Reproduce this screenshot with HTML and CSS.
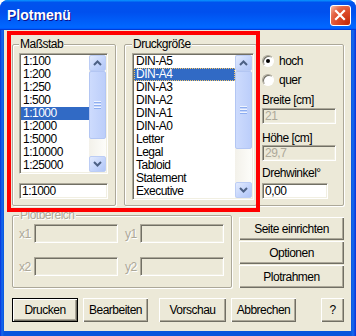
FILE: index.html
```html
<!DOCTYPE html>
<html lang="de">
<head>
    <meta charset="UTF-8">
    <title>Plotmenü</title>
    <link rel="stylesheet" href="styles.css">
</head>
<body>
    <div class="window">
        <div class="titlebar">
            <span class="title">Plotmenü</span>
            <button class="close">
                <svg width="19" height="19" viewBox="0 0 19 19"><path d="M5 5 L13 13 M13 5 L5 13" stroke="#fff" stroke-width="2.2" stroke-linecap="square"/></svg>
            </button>
        </div>

        <div class="client">
            <div class="top-row">
                <fieldset class="group scale-group">
                    <legend>Maßstab</legend>
                    <div class="listbox scale-list">
                        <ul class="items">
                            <li>1:100</li>
                            <li>1:200</li>
                            <li>1:250</li>
                            <li>1:500</li>
                            <li class="selected">1:1000</li>
                            <li>1:2000</li>
                            <li>1:5000</li>
                            <li>1:10000</li>
                            <li>1:25000</li>
                        </ul>
                        <div class="scrollbar">
                            <div class="sb-btn"><svg width="9" height="6"><path d="M1 5 L4.5 1.5 L8 5" stroke="#4d6185" stroke-width="2" fill="none"/></svg></div>
                            <div class="sb-thumb scale-thumb"><svg width="7" height="8"><rect y="0" width="7" height="1" fill="#eef3fe"/><rect y="1" width="7" height="1" fill="#8eaef0"/><rect y="3" width="7" height="1" fill="#eef3fe"/><rect y="4" width="7" height="1" fill="#8eaef0"/><rect y="6" width="7" height="1" fill="#eef3fe"/><rect y="7" width="7" height="1" fill="#8eaef0"/></svg></div>
                            <div class="sb-track"></div>
                            <div class="sb-btn"><svg width="9" height="6"><path d="M1 1 L4.5 4.5 L8 1" stroke="#4d6185" stroke-width="2" fill="none"/></svg></div>
                        </div>
                    </div>
                    <input class="edit scale-edit" type="text" value="1:1000">
                </fieldset>

                <fieldset class="group size-group">
                    <legend>Druckgröße</legend>
                    <div class="listbox size-list">
                        <ul class="items">
                            <li>DIN-A5</li>
                            <li class="selected focused">DIN-A4</li>
                            <li>DIN-A3</li>
                            <li>DIN-A2</li>
                            <li>DIN-A1</li>
                            <li>DIN-A0</li>
                            <li>Letter</li>
                            <li>Legal</li>
                            <li>Tabloid</li>
                            <li>Statement</li>
                            <li>Executive</li>
                        </ul>
                        <div class="scrollbar">
                            <div class="sb-btn"><svg width="9" height="6"><path d="M1 5 L4.5 1.5 L8 5" stroke="#4d6185" stroke-width="2" fill="none"/></svg></div>
                            <div class="sb-thumb size-thumb"><svg width="7" height="8"><rect y="0" width="7" height="1" fill="#eef3fe"/><rect y="1" width="7" height="1" fill="#8eaef0"/><rect y="3" width="7" height="1" fill="#eef3fe"/><rect y="4" width="7" height="1" fill="#8eaef0"/><rect y="6" width="7" height="1" fill="#eef3fe"/><rect y="7" width="7" height="1" fill="#8eaef0"/></svg></div>
                            <div class="sb-track"></div>
                            <div class="sb-btn"><svg width="9" height="6"><path d="M1 1 L4.5 4.5 L8 1" stroke="#4d6185" stroke-width="2" fill="none"/></svg></div>
                        </div>
                    </div>
                </fieldset>

                <div class="group orient-group">
                    <label class="radio"><span class="radio-box checked"></span>hoch</label>
                    <label class="radio quer"><span class="radio-box"></span>quer</label>
                    <div class="field-label breite-label">Breite [cm]</div>
                    <input class="edit wide-edit breite-edit" type="text" value="21" disabled>
                    <div class="field-label hoehe-label">Höhe [cm]</div>
                    <input class="edit wide-edit" type="text" value="29,7" disabled>
                    <div class="field-label dreh-label">Drehwinkel°</div>
                    <input class="edit dreh-edit" type="text" value="0,00">
                </div>

                <div class="mark-frame"></div>
            </div>

            <div class="middle-row">
                <fieldset class="group plot-group">
                    <legend>Plotbereich</legend>
                    <div class="coords">
                        <div class="coord"><span class="coord-label">x1</span><input class="edit coord-edit" type="text" disabled></div>
                        <div class="coord"><span class="coord-label">y1</span><input class="edit coord-edit" type="text" disabled></div>
                        <div class="coord"><span class="coord-label">x2</span><input class="edit coord-edit" type="text" disabled></div>
                        <div class="coord"><span class="coord-label">y2</span><input class="edit coord-edit" type="text" disabled></div>
                    </div>
                </fieldset>

                <div class="side-buttons">
                    <button class="btn">Seite einrichten</button>
                    <button class="btn">Optionen</button>
                    <button class="btn">Plotrahmen</button>
                </div>
            </div>

            <div class="bottom-row">
                <button class="btn default drucken">Drucken</button>
                <button class="btn bearbeiten">Bearbeiten</button>
                <button class="btn vorschau">Vorschau</button>
                <button class="btn abbrechen">Abbrechen</button>
                <button class="btn help">?</button>
            </div>
        </div>
    </div>
</body>
</html>
```

FILE: styles.css
```css
* {
    box-sizing: border-box;
}

body {
    margin: 0;
    background: #fff;
    font-family: "Liberation Sans", Arial, sans-serif;
    font-size: 12px;
    letter-spacing: -0.5px;
    color: #000;
}

.window {
    width: 356px;
    height: 336px;
    display: flex;
    flex-direction: column;
    background: linear-gradient(to right, #0831d9, #166aee 2px, #0855dd 4px, #0855dd 351px, #166aee 353px, #0831d9);
    border-radius: 8px 8px 0 0;
    overflow: hidden;
}

.titlebar {
    height: 30px;
    display: flex;
    align-items: center;
    justify-content: space-between;
    padding: 0 5px 0 7px;
    background: linear-gradient(180deg, #0997ff, #0053ee 8%, #0050ee 40%, #0066ff 88%, #0066ff 93%, #005bff 95%, #003dd7 96%, #003dd7);
}

.title {
    font-weight: bold;
    font-size: 14px;
    letter-spacing: 0;
    color: #fff;
    text-shadow: 1px 1px #0f1089;
}

.close {
    width: 21px;
    height: 21px;
    padding: 0;
    border: 1px solid #fff;
    border-radius: 3px;
    background: radial-gradient(circle at 90% 90%, #c42b0a 0, #e0512f 55%, #e56a4c 72%, #f6b39f 95%);
    display: flex;
    align-items: center;
    justify-content: center;
}

.client {
    flex: 1;
    margin: 0 5px 5px 4px;
    padding: 7px 7px 0 8px;
    background: #ece9d8;
    position: relative;
}

/* group boxes */

.group {
    margin: 0;
    border: 1px solid #aca899;
    border-radius: 2px;
    box-shadow: inset 1px 1px #fff, 1px 1px #fff;
}

legend {
    padding: 0 1px;
    line-height: 14px;
    background: #ece9d8;
}

.top-row {
    display: flex;
}

.scale-group {
    width: 104px;
    padding: 2px 7px 6px 6px;
}

.size-group {
    width: 133px;
    margin-left: 8px;
    padding: 2px 2px 5px 7px;
}

.orient-group {
    width: 86px;
    margin: 7px 0 0 1px;
    padding: 9px 0 0 3px;
    display: flex;
    flex-direction: column;
    align-items: flex-start;
}

.mark-frame {
    position: absolute;
    left: 3px;
    top: 1px;
    width: 253px;
    height: 181px;
    border: 4px solid #ff0000;
}

/* list boxes */

.listbox {
    display: flex;
    padding: 1px;
    border: 1px solid;
    border-color: #aca899 #fff #fff #aca899;
    box-shadow: inset 1px 1px #716f64, inset -1px -1px #f1efe2;
    background: #fff;
}

.scale-list {
    width: 89px;
}

.size-list {
    width: 122px;
}

.items {
    flex: 1;
    margin: 0;
    padding: 0;
    list-style: none;
}

.items li {
    height: 13px;
    line-height: 13px;
    padding-left: 2px;
    white-space: nowrap;
}

.items .selected {
    background: #316ac5;
    color: #fff;
}

.items .focused {
    outline: 1px dotted #f2c66a;
    outline-offset: -1px;
}

.scrollbar {
    width: 17px;
    display: flex;
    flex-direction: column;
    background: linear-gradient(to right, #f3f1ea, #fdfdfa);
}

.sb-btn {
    height: 16px;
    border: 1px solid #bccdf5;
    border-radius: 2px;
    background: linear-gradient(135deg, #e3ebfe, #c2d3fb 60%, #b1c6f7);
    display: flex;
    align-items: center;
    justify-content: center;
}

.sb-thumb {
    border: 1px solid #b3c6f3;
    border-radius: 2px;
    background: linear-gradient(to right, #cddbfd, #bccefa);
    display: flex;
    align-items: center;
    justify-content: center;
}

.scale-thumb {
    height: 68px;
}

.size-thumb {
    height: 78px;
}

.sb-track {
    flex: 1;
}

/* edit fields */

.edit {
    display: block;
    height: 16px;
    margin: 0;
    padding: 0 2px;
    font: inherit;
    letter-spacing: inherit;
    color: #000;
    border: 1px solid;
    border-color: #aca899 #fff #fff #aca899;
    box-shadow: inset 1px 1px #716f64, inset -1px -1px #f1efe2;
    background: #fff;
    outline: none;
}

.edit:disabled {
    background: #ece9d8;
    color: #aca899;
}

.scale-edit {
    width: 89px;
    margin-top: 9px;
}

.wide-edit {
    width: 74px;
}

.dreh-edit {
    width: 66px;
    margin-top: 3px;
}

.breite-edit {
    margin-top: 1px;
}

/* right side options */

.radio {
    display: flex;
    align-items: center;
    height: 14px;
}

.quer {
    margin-top: 5px;
}

.radio-box {
    width: 12px;
    height: 12px;
    margin-right: 5px;
    border-radius: 50%;
    border: 1px solid;
    border-color: #aca899 #fff #fff #aca899;
    box-shadow: inset 1px 1px #716f64;
    background: #fff;
    display: flex;
    align-items: center;
    justify-content: center;
}

.radio-box.checked::after {
    content: "";
    width: 4px;
    height: 4px;
    border-radius: 50%;
    background: #000;
}

.field-label {
    height: 14px;
    line-height: 14px;
}

.breite-label {
    margin-top: 6px;
}

.hoehe-label {
    margin-top: 7px;
}

.dreh-label {
    margin-top: 5px;
}

/* plot area */

.middle-row {
    display: flex;
    margin-top: 2px;
}

.plot-group {
    width: 220px;
    padding: 2px 6px 11px 6px;
}

.plot-group legend,
.coord-label {
    color: #aca899;
    text-shadow: 1px 1px #fff;
}

.coords {
    display: grid;
    grid-template-columns: 99px 99px;
    column-gap: 7px;
    row-gap: 14px;
}

.coord {
    display: flex;
    align-items: center;
}

.coord-label {
    width: 15px;
}

.coord-edit {
    width: 84px;
    height: 19px;
}

.side-buttons {
    width: 105px;
    margin: 9px 0 0 auto;
    display: flex;
    flex-direction: column;
    gap: 1px;
}

/* buttons */

.btn {
    height: 23px;
    padding: 0;
    border: none;
    font: inherit;
    letter-spacing: inherit;
    color: #000;
    background: #ece9d8;
    box-shadow: inset 1px 1px #fff, inset -1px -1px #716f64, inset -2px -2px #aca899;
}

.btn.default {
    border: 1px solid #000;
}

.bottom-row {
    display: flex;
    margin-top: 10px;
}

.bottom-row .btn {
    height: 24px;
}

.drucken {
    width: 66px;
}

.bearbeiten {
    width: 65px;
    margin-left: 5px;
}

.vorschau {
    width: 67px;
    margin-left: 11px;
}

.abbrechen {
    width: 65px;
    margin-left: 5px;
}

.help {
    width: 23px;
    margin-left: auto;
}
```
